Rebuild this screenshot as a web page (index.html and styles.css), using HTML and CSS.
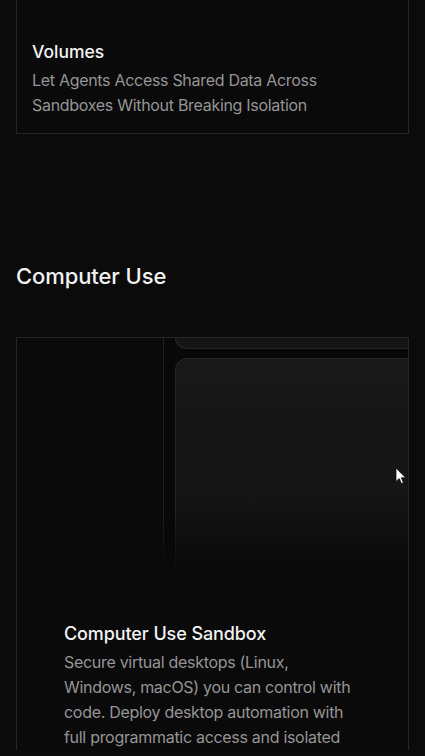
FILE: index.html
```html
<!DOCTYPE html>
<html lang="en">
<head>
    <meta charset="UTF-8">
    <meta name="viewport" content="width=device-width, initial-scale=1.0">
    <title>Features</title>
    <link rel="stylesheet" href="styles.css">
</head>
<body>
    <div class="feature-card volumes">
        <div class="card-text">
            <h3>Volumes</h3>
            <p>Let Agents Access Shared Data Across Sandboxes Without Breaking Isolation</p>
        </div>
    </div>

    <h2 class="section-title">Computer Use</h2>

    <div class="feature-card computer">
        <div class="preview">
            <div class="preview-side"></div>
            <div class="preview-main">
                <div class="panel panel-top"></div>
                <div class="panel panel-screen">
                    <svg class="cursor" width="12" height="18" viewBox="0 0 12 18">
                        <path d="M1 1 L1 14.5 L4.2 11.6 L6.4 16.6 L8.4 15.7 L6.3 10.8 L10.6 10.8 Z" fill="#fff" stroke="#111" stroke-width="0.8" stroke-linejoin="round"/>
                    </svg>
                </div>
            </div>
        </div>
        <div class="card-text wide">
            <h3>Computer Use Sandbox</h3>
            <p>Secure virtual desktops (Linux, Windows, macOS) you can control with code. Deploy desktop automation with full programmatic access and isolated</p>
        </div>
    </div>
</body>
</html>
```

FILE: styles.css
```css
body {
    font-family: Inter, "Noto Sans", sans-serif;
    margin: 0;
    padding: 0 16px;
    background-color: #0b0b0b;
    color: #f2f2f2;
}
.feature-card {
    border: 1px solid #262626;
    background: #0a0a0a;
    overflow: hidden;
}
.volumes {
    border-top: none;
    padding-top: 40px;
}
.card-text {
    padding: 0 15px 15px;
}
.card-text h3 {
    margin: 0 0 4px;
    font-size: 17.5px;
    font-weight: 500;
    line-height: 24px;
    letter-spacing: 0;
}
.card-text p {
    margin: 0;
    font-size: 16px;
    line-height: 25px;
    letter-spacing: -0.3px;
    color: #959595;
}
.section-title {
    margin: 126px 0 45px;
    font-size: 22px;
    font-weight: 500;
    line-height: 32px;
    letter-spacing: -0.1px;
}
.computer {
    border-bottom: none;
}
.preview {
    display: flex;
    height: 250px;
    -webkit-mask-image: linear-gradient(to bottom, #000 66%, transparent 94%);
    mask-image: linear-gradient(to bottom, #000 66%, transparent 94%);
}
.preview-side {
    width: 146px;
    flex-shrink: 0;
    border-right: 1px solid #222;
    background: #0a0a0a;
}
.preview-main {
    flex: 1;
    display: flex;
    flex-direction: column;
    gap: 9px;
    padding-left: 11px;
    margin-right: -20px;
    background: #080808;
}
.panel {
    border: 1px solid #262626;
    background: #151515;
}
.panel-top {
    height: 10px;
    border-top: none;
    border-radius: 0 0 0 12px;
}
.panel-screen {
    position: relative;
    flex: 1;
    border-radius: 12px 12px 0 0;
    background: linear-gradient(to bottom, #181818, #131313 80%);
}
.cursor {
    position: absolute;
    left: 219px;
    top: 108px;
}
.card-text.wide {
    padding: 34px 48px 0 47px;
}
.card-text.wide h3 {
    font-size: 18px;
    letter-spacing: -0.1px;
}
```
